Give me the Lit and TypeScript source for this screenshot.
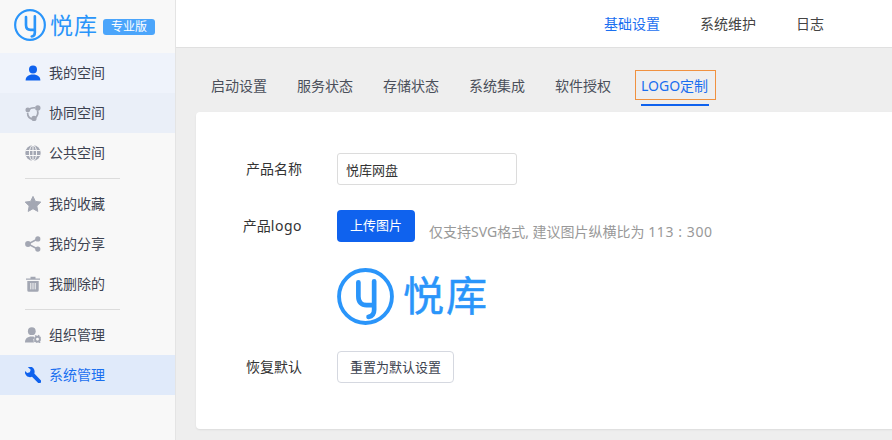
import { LitElement, html, css, svg } from "lit";
import { customElement } from "lit/decorators.js";

const G = "#a3a7b3";
const B = "#0f62ee";

const icons: Record<string, unknown> = {
  user: svg`<circle cx="8" cy="4.6" r="4" fill="${B}"/><path d="M0.6 15.5c0-3.6 2.600-6 7.400-6s7.400 2.400 7.400 6z" fill="${B}"/>`,
  team: svg`<path d="M3.500 5.500C4.500 3.500 7 2.600 10 2.800M2.600 8c0 3 2 5.600 5.400 6.200M12.500 5.500c.8 2.600 0 5.400-2.400 7.600" fill="none" stroke="${G}" stroke-width="1.700"/><circle cx="2.800" cy="5" r="2.400" fill="${G}"/><circle cx="12.800" cy="3" r="2.700" fill="${G}"/><circle cx="9" cy="13.400" r="2.600" fill="${G}"/>`,
  globe: svg`<circle cx="8" cy="8" r="7.700" fill="${G}"/><g fill="none" stroke="#f8f8f8" stroke-width="1"><ellipse cx="8" cy="8" rx="3.600" ry="7.700"/><path d="M8 0v16M.6 5.500h14.800M.6 10.500h14.800"/></g>`,
  star: svg`<path d="M8 .4l2.400 5 5.400.7-4 3.800 1 5.500L8 12.700l-4.800 2.700 1-5.500-4-3.800 5.400-.7z" fill="${G}" stroke="${G}" stroke-linejoin="round"/>`,
  share: svg`<path d="M12.600 3L3 8l9.600 5" fill="none" stroke="${G}" stroke-width="1.500"/><circle cx="12.800" cy="2.900" r="2.600" fill="${G}"/><circle cx="3" cy="8" r="2.900" fill="${G}"/><circle cx="12.800" cy="13.100" r="2.600" fill="${G}"/>`,
  trash: svg`<path d="M1 2.400h14v1.400H1zM5.500 2.400V.8h5v1.600z" fill="${G}"/><path d="M2.300 5h11.400v9.200a1.600 1.600 0 0 1-1.600 1.600H3.900a1.600 1.600 0 0 1-1.600-1.600z" fill="${G}"/><path d="M5.800 7v6.400M8 7v6.400M10.200 7v6.400" stroke="#f8f8f8" stroke-width="1"/>`,
  org: svg`<circle cx="6.800" cy="4.200" r="3.900" fill="${G}"/><path d="M0 15.400c0-3.600 2.200-5.800 6.800-5.800 1 0 1.900.1 2.600.3-1.200 1.400-1.400 3.600-.4 5.500z" fill="${G}"/><circle cx="12.500" cy="12.200" r="2.400" fill="none" stroke="${G}" stroke-width="1.900"/><circle cx="12.500" cy="12.200" r="3.900" fill="none" stroke="${G}" stroke-width="1.100" stroke-dasharray="1.500 1.560"/>`,
  wrench: svg`<path d="M15.600 14L8.900 7.200c.7-2 .3-4.200-1.200-5.700C6.200 0 4 -.3 2.200.4l3.100 3-.9 2.500-2.600.8-3-3C-.9 5.500-.4 7.800 1.100 9.300c1.500 1.500 3.600 1.800 5.500 1.100l6.700 6.700c.4.300 1 .300 1.300 0l1-1.200c.4-.5.400-1.500 0-1.900z" fill="${B}" transform="translate(.4 -.6)"/>`,
};

type Item = { icon: string; label: string; cls?: string };
const groups: Item[][] = [
  [
    { icon: "user", label: "我的空间", cls: "mine" },
    { icon: "team", label: "协同空间", cls: "team" },
    { icon: "globe", label: "公共空间" },
  ],
  [
    { icon: "star", label: "我的收藏" },
    { icon: "share", label: "我的分享" },
    { icon: "trash", label: "我删除的" },
  ],
  [
    { icon: "org", label: "组织管理" },
    { icon: "wrench", label: "系统管理", cls: "active" },
  ],
];

const mark = (size: number) => html`<svg class="mark" width=${size} height=${size} viewBox="0 0 56 56" fill="none" stroke="#2a95fa">
  <circle cx="28" cy="28" r="26" stroke-width="3.800"/>
  <path d="M21 14V28c0 5.500 3 8.500 8 8.500h7.500M36.500 13V41c0 4.500-2 6.500-5.500 7" stroke-width="4.600" stroke-linecap="round"/>
</svg>`;

@customElement("app-root")
export class AppRoot extends LitElement {
  static styles = css`
    :host {
      display: block;
      width: 892px;
      height: 440px;
      overflow: hidden;
      font-family: "Noto Sans", "Noto Sans CJK SC", sans-serif;
      font-size: 14px;
      color: #333;
    }
    * { box-sizing: border-box; }
    .app { display: flex; width: 892px; height: 440px; background: #eeeeee; }
    .side { width: 176px; flex: none; background: #f8f8f8; border-right: 1px solid #e4e4e4; }
    .brand { height: 53px; display: flex; align-items: center; padding: 0 0 3px 14px; }
    .mark { display: block; flex: none; }
    .brand-name {
      font-size: 23px; line-height: 32px; color: #2a95fa; margin-left: 4px; letter-spacing: 1px; width: 53px;
    }
    .badge {
      margin-top: 3px; width: 52px; height: 16px; border-radius: 3px; background: #4ba5fb; color: #fff;
      font-size: 12px; line-height: 16px; text-align: center;
    }
    .row { height: 40px; display: flex; align-items: center; padding-left: 25px; color: #3c4250; line-height: 38px; }
    .row svg { display: block; flex: none; margin-right: 8px; }
    .row.mine { background: #eff3fb; }
    .row.team { background: #eaeff8; }
    .row.active { background: #e0eafa; color: #1a6ff0; }
    .rule { height: 1px; width: 95px; margin: 5px 0 5px 25px; background: #dcdcdc; }
    .main { flex: 1; min-width: 0; display: flex; flex-direction: column; }
    .top {
      height: 48px; flex: none; background: #fff; border-bottom: 1px solid #e0e0e0;
      display: flex; justify-content: flex-end; align-items: center; gap: 40px; padding: 0 68px 2px 0; color: #444;
    }
    .top .on { color: #1a6ff0; }
    .tabs { height: 64px; flex: none; display: flex; align-items: flex-start; padding: 22px 0 0 35px; gap: 30px; color: #4a4f5a; }
    .tab { height: 30px; line-height: 32px; white-space: nowrap; position: relative; }
    .tab.on {
      color: #1a6ff0; outline: 1px solid #f0913f; outline-offset: -1px;
      width: 81px; flex: none; padding-left: 6px; margin: 0 -7px 0 -6px;
    }
    .tab.on::after { content: ""; position: absolute; left: 6px; width: 68px; top: 34px; height: 2px; background: #0f62ee; }
    .card {
      width: 720px; height: 317px; margin-left: 20px; background: #fff; border-radius: 4px 0 0 4px;
      box-shadow: 0 1px 2px rgba(0, 0, 0, 0.08);
      display: grid; grid-template-columns: 106px 1fr; grid-template-rows: 32px 32px auto 32px; column-gap: 35px;
      padding: 41px 0 0 0; align-content: start;
    }
    .label { text-align: right; line-height: 31px; color: #333; }
    .label.l2 { margin-top: 25px; }
    .wide { letter-spacing: 0.5px; }
    .input {
      width: 180px; height: 32px; border: 1px solid #dcdcdc; border-radius: 3px; padding: 0 8px; line-height: 32px; color: #333; font-size: 13px;
    }
    .upload { margin-top: 25px; display: flex; align-items: flex-start; }
    .btn-p { width: 78px; height: 32px; border-radius: 4px; background: #0f62ee; color: #fff; text-align: center; line-height: 30px; flex: none; font-size: 13px; }
    .hint { margin: 9px 0 0 14px; color: #999; line-height: 26px; white-space: nowrap; }
    .num { letter-spacing: 0.6px; }
    .logo { grid-column: 2; margin-top: 49px; height: 60px; display: flex; align-items: center; }
    .logo-name {
      font-size: 41px; line-height: 56px; color: #2a95fa; margin: 0 0 2px 9px; letter-spacing: 2px;
      -webkit-text-stroke: 0.5px #2a95fa;
    }
    .label.l4 { margin-top: 25px; }
    .btn { margin-top: 25px; width: 117px; height: 32px; border: 1px solid #d5d8e0; border-radius: 4px; text-align: center; line-height: 30px; color: #3c4250; background: #fff; font-size: 13px; }
  `;

  render() {
    return html`<div class="app">
      <aside class="side">
        <div class="brand">
          ${mark(32)}<span class="brand-name">悦库</span><span class="badge">专业版</span>
        </div>
        ${groups.map(
          (g, i) => html`${i ? html`<div class="rule"></div>` : ""}${g.map(
            (r) => html`<div class="row ${r.cls ?? ""}">
              <svg width="16" height="16" viewBox="0 0 16 16">${icons[r.icon]}</svg><span>${r.label}</span>
            </div>`
          )}`
        )}
      </aside>
      <div class="main">
        <div class="top"><span class="on">基础设置</span><span>系统维护</span><span>日志</span></div>
        <div class="tabs">
          <span class="tab">启动设置</span><span class="tab">服务状态</span><span class="tab">存储状态</span>
          <span class="tab">系统集成</span><span class="tab">软件授权</span><span class="tab on">LOGO定制</span>
        </div>
        <div class="card">
          <div class="label">产品名称</div>
          <div><div class="input">悦库网盘</div></div>
          <div class="label l2">产品<span class="wide">logo</span></div>
          <div class="upload"><div class="btn-p">上传图片</div><div class="hint">仅支持SVG格式, 建议图片纵横比为 <span class="num">113 : 300</span></div></div>
          <div class="logo">${mark(57)}<span class="logo-name">悦库</span></div>
          <div class="label l4">恢复默认</div>
          <div><div class="btn">重置为默认设置</div></div>
        </div>
      </div>
    </div>`;
  }
}
